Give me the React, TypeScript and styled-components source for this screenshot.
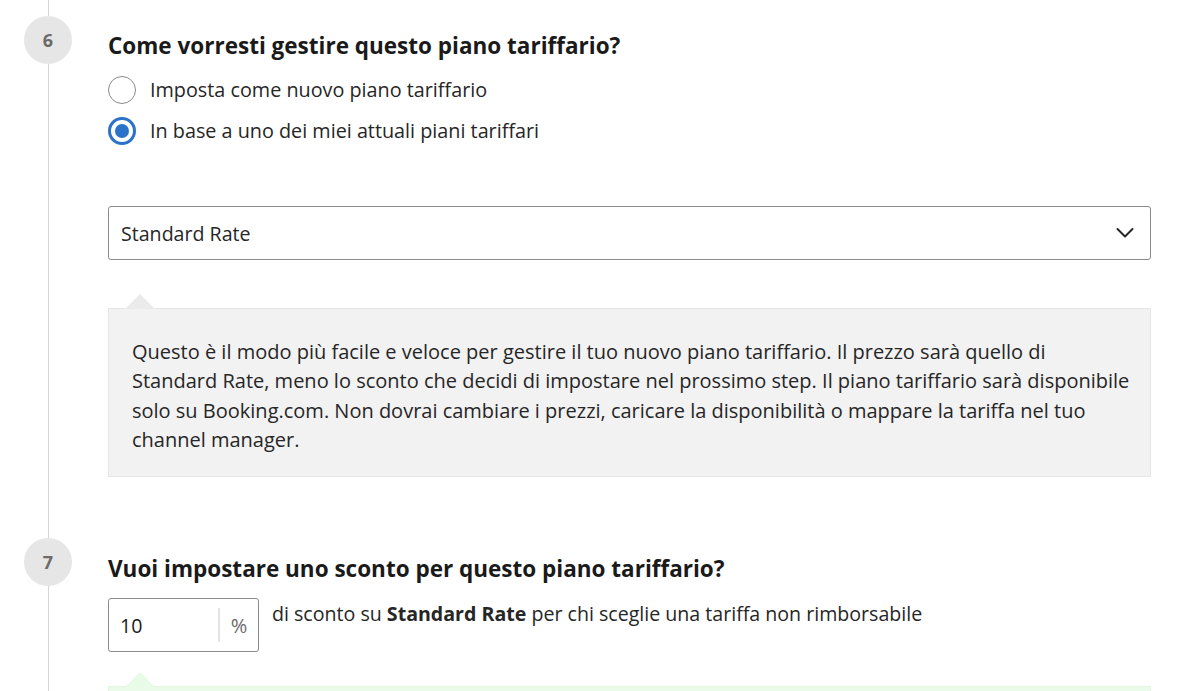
import React from 'react';
import styled, { createGlobalStyle } from 'styled-components';

const GlobalStyle = createGlobalStyle`
  html, body {
    margin: 0;
    padding: 0;
    background: #ffffff;
  }
  body {
    font-family: "Open Sans", "Noto Sans", Arial, sans-serif;
    color: #262626;
    overflow: hidden;
  }
`;

const Page = styled.div`
  width: 1198px;
  height: 691px;
  overflow: hidden;
`;

const Step = styled.section`
  display: grid;
  grid-template-columns: 108px 1043px;
`;

const Rail = styled.div`
  background: linear-gradient(#d6d6d6, #d6d6d6) no-repeat 48px 0 / 1px 100%;
  padding-top: ${(p: { top: number }) => p.top}px;
`;

const Badge = styled.div`
  width: 48px;
  height: 48px;
  margin-left: 24px;
  border-radius: 50%;
  background: #e6e6e6;
  color: #6b6b6b;
  font-weight: 700;
  font-size: 18px;
  display: flex;
  align-items: center;
  justify-content: center;
`;

const Body = styled.div<{ top: number; bottom: number }>`
  padding-top: ${(p) => p.top}px;
  padding-bottom: ${(p) => p.bottom}px;
  display: flex;
  flex-direction: column;
`;

const Title = styled.h2`
  margin: 0;
  font-size: 22.5px;
  line-height: 28px;
  font-weight: 700;
  color: #1a1a1a;
`;

const RadioList = styled.div`
  display: flex;
  flex-direction: column;
  gap: 13px;
  margin-top: 16px;
`;

const RadioRow = styled.label`
  display: flex;
  align-items: center;
  gap: 14px;
  font-size: 19.8px;
  line-height: 28px;
  color: #262626;
`;

const RadioDot = styled.span<{ checked?: boolean }>`
  box-sizing: border-box;
  width: 28px;
  height: 28px;
  border-radius: 50%;
  border: ${(p) => (p.checked ? '3px solid #2a73c8' : '1px solid #8c8c8c')};
  background: #fff;
  display: flex;
  align-items: center;
  justify-content: center;
  &::after {
    content: '';
    display: ${(p) => (p.checked ? 'block' : 'none')};
    width: 14px;
    height: 14px;
    border-radius: 50%;
    background: #2a73c8;
  }
`;

const Select = styled.div`
  box-sizing: border-box;
  margin-top: 61px;
  height: 54px;
  border: 1px solid #8a8a8a;
  border-radius: 3px;
  display: flex;
  align-items: center;
  justify-content: space-between;
  padding: 0 16px 0 12px;
  font-size: 19.6px;
  color: #262626;
`;

const Hint = styled.div<{ tone: 'grey' | 'green' }>`
  position: relative;
  box-sizing: border-box;
  margin-top: ${(p) => (p.tone === 'grey' ? 48 : 34)}px;
  background: ${(p) => (p.tone === 'grey' ? '#f2f2f2' : '#ebfbe9')};
  border: 1px solid ${(p) => (p.tone === 'grey' ? '#e6e6e6' : '#e2f7df')};
  padding: 28px 23px 22px;
  font-size: 20px;
  line-height: 29.3px;
  color: #262626;
  white-space: nowrap;
  &::before {
    content: '';
    position: absolute;
    top: -15px;
    left: 16px;
    width: 0;
    height: 0;
    border-left: 15px solid transparent;
    border-right: 15px solid transparent;
    border-bottom: 15px solid ${(p) => (p.tone === 'grey' ? '#ebebeb' : '#e8fbe6')};
  }
`;

const DiscountRow = styled.div`
  display: flex;
  align-items: flex-start;
  gap: 13px;
  margin-top: 15px;
`;

const Field = styled.div`
  box-sizing: border-box;
  width: 151px;
  height: 54px;
  border: 1px solid #8a8a8a;
  border-radius: 3px;
  display: flex;
  align-items: center;
  padding-left: 11px;
  font-size: 19.6px;
  color: #1a1a1a;
`;

const FieldValue = styled.span`
  flex: 1;
`;

const Unit = styled.span`
  border-left: 2px solid #e3e3e3;
  height: 34px;
  width: 38px;
  display: flex;
  align-items: center;
  justify-content: center;
  color: #6b6b6b;
  font-size: 20px;
`;

const Sentence = styled.p`
  margin: 0;
  padding-top: 2px;
  font-size: 19.6px;
  line-height: 28px;
  color: #262626;
`;

const Chevron = () => (
  <svg width="18" height="12" viewBox="0 0 18 12" fill="none">
    <path d="M1.5 2 L9 9.5 L16.5 2" stroke="#262626" strokeWidth="2" strokeLinecap="round" strokeLinejoin="round" />
  </svg>
);

export default function App() {
  return (
    <Page>
      <GlobalStyle />
      <Step>
        <Rail top={16}>
          <Badge>6</Badge>
        </Rail>
        <Body top={32} bottom={61}>
          <Title>Come vorresti gestire questo piano tariffario?</Title>
          <RadioList>
            <RadioRow>
              <RadioDot />
              Imposta come nuovo piano tariffario
            </RadioRow>
            <RadioRow>
              <RadioDot checked />
              In base a uno dei miei attuali piani tariffari
            </RadioRow>
          </RadioList>
          <Select>
            Standard Rate
            <Chevron />
          </Select>
          <Hint tone="grey">
            Questo è il modo più facile e veloce per gestire il tuo nuovo piano tariffario. Il prezzo sarà quello di
            <br />
            Standard Rate, meno lo sconto che decidi di impostare nel prossimo step. Il piano tariffario sarà disponibile
            <br />
            solo su Booking.com. Non dovrai cambiare i prezzi, caricare la disponibilità o mappare la tariffa nel tuo
            <br />
            channel manager.
          </Hint>
        </Body>
      </Step>
      <Step>
        <Rail top={0}>
          <Badge>7</Badge>
        </Rail>
        <Body top={17} bottom={0}>
          <Title>Vuoi impostare uno sconto per questo piano tariffario?</Title>
          <DiscountRow>
            <Field>
              <FieldValue>10</FieldValue>
              <Unit>%</Unit>
            </Field>
            <Sentence>
              di sconto su <b>Standard Rate</b> per chi sceglie una tariffa non rimborsabile
            </Sentence>
          </DiscountRow>
          <Hint tone="green">&nbsp;</Hint>
        </Body>
      </Step>
    </Page>
  );
}
